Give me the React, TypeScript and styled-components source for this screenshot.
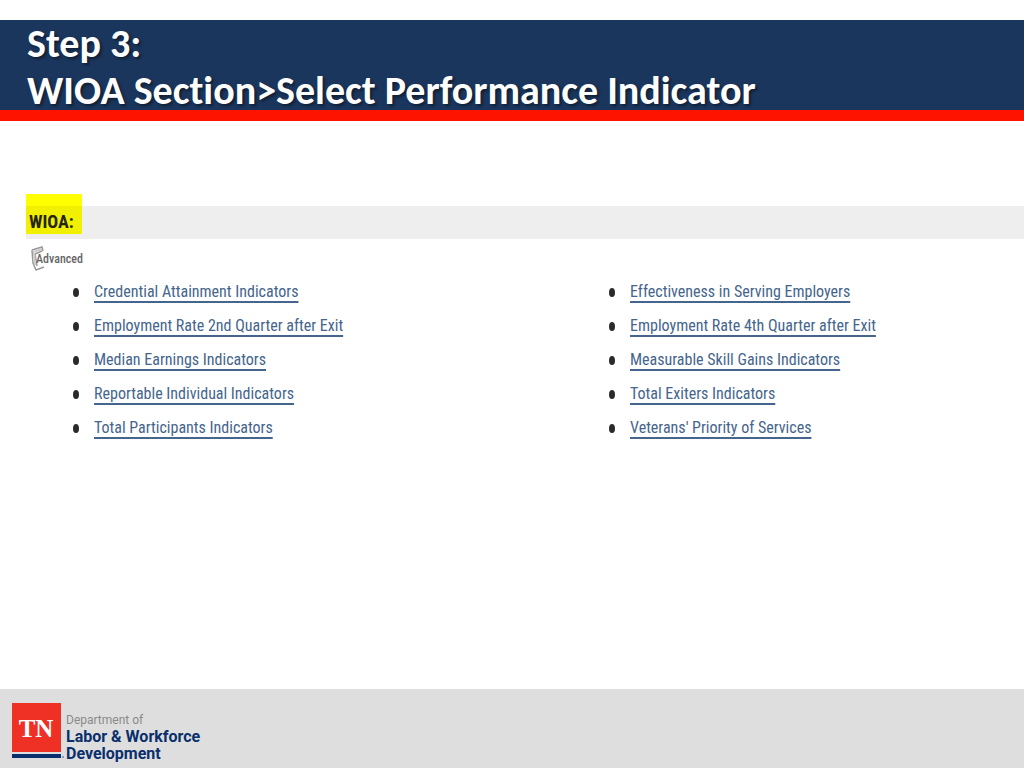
import React from "react";
import styled, { createGlobalStyle } from "styled-components";

const GlobalStyle = createGlobalStyle`
  *, *::before, *::after { box-sizing: border-box; }
  body {
    margin: 0;
    background: #ffffff;
    font-family: "Open Sans", "Noto Sans", sans-serif;
  }
`;

const Slide = styled.div`
  display: flex;
  flex-direction: column;
  min-height: 100vh;
  padding-top: 20px;
`;

const Banner = styled.header`
  height: 101px;
  background: #1b365d;
  border-bottom: 11px solid #fe1300;
  padding: 0 27px;
`;

const Title = styled.h1`
  margin: 0;
  font-family: Carlito, Lato, sans-serif;
  font-size: 40px;
  font-weight: 700;
  line-height: 47px;
  font-variant-ligatures: none;
  color: #ffffff;
  text-shadow: 2px 2px 3px rgba(0, 0, 0, 0.45);
`;

const TitleLine = styled.span`
  display: block;
`;

const Content = styled.main`
  flex: 1;
  padding: 73px 0 32px 26px;
`;

const SectionBar = styled.div`
  display: flex;
  align-items: flex-start;
  height: 45px;
  background: linear-gradient(#ffffff 12px, #eeeeee 12px);
`;

const SectionTitle = styled.h2`
  margin: 0;
  width: 56px;
  height: 40px;
  padding: 16px 0 0 3px;
  background: linear-gradient(#ffff00 12px, #f0f000 12px);
  font-family: "Roboto Condensed", Carlito, sans-serif;
  font-size: 18px;
  font-weight: 700;
  line-height: 24px;
  color: #25250c;
`;

const Advanced = styled.div`
  display: flex;
  align-items: center;
  height: 36px;
  padding: 3px 0 0 5px;
  font-family: "Roboto Condensed", Carlito, sans-serif;
  font-size: 12px;
  font-weight: 500;
  line-height: 20px;
  color: #666666;
`;

const AdvancedIcon = styled.svg`
  width: 16px;
  height: 28px;
  margin-right: -11px;
`;

const Columns = styled.div`
  display: grid;
  grid-template-columns: 536px 1fr;
`;

const LinkList = styled.ul`
  margin: 0;
  padding: 0 0 0 47px;
  list-style: none;
`;

const LinkItem = styled.li`
  display: flex;
  align-items: center;
  height: 34px;
  gap: 15px;

  &::before {
    content: "";
    width: 6px;
    height: 9px;
    border-radius: 50%;
    background: #2b2b2b;
  }
`;

const IndicatorLink = styled.a`
  font-family: "Roboto Condensed", Carlito, sans-serif;
  font-size: 16px;
  line-height: 24px;
  color: #45658c;
  text-decoration: underline;
  text-decoration-thickness: 2px;
  text-underline-offset: 4px;
`;

const Footer = styled.footer`
  display: flex;
  align-items: flex-start;
  height: 79px;
  padding: 14px 12px 0;
  background: #dedede;
`;

const Logo = styled.svg`
  width: 54px;
  height: 56px;
`;

const Department = styled.p`
  margin: 0;
  padding-top: 9px;
  font-family: Roboto, sans-serif;
  font-size: 12px;
  line-height: 16px;
  color: #8a8a8c;
`;

const DepartmentName = styled.strong`
  display: block;
  font-size: 16px;
  line-height: 17px;
  font-weight: 700;
  color: #0a2f6c;
`;

const leftLinks = [
  "Credential Attainment Indicators",
  "Employment Rate 2nd Quarter after Exit",
  "Median Earnings Indicators",
  "Reportable Individual Indicators",
  "Total Participants Indicators",
];

const rightLinks = [
  "Effectiveness in Serving Employers",
  "Employment Rate 4th Quarter after Exit",
  "Measurable Skill Gains Indicators",
  "Total Exiters Indicators",
  "Veterans' Priority of Services",
];

function Indicators({ items }: { items: string[] }) {
  return (
    <LinkList>
      {items.map((item) => (
        <LinkItem key={item}>
          <IndicatorLink href="#">{item}</IndicatorLink>
        </LinkItem>
      ))}
    </LinkList>
  );
}

export default function App() {
  return (
    <>
      <GlobalStyle />
      <Slide>
        <Banner>
          <Title>
            <TitleLine>Step 3:</TitleLine>
            <TitleLine>WIOA Section&gt;Select Performance Indicator</TitleLine>
          </Title>
        </Banner>
        <Content>
          <SectionBar>
            <SectionTitle>WIOA:</SectionTitle>
          </SectionBar>
          <Advanced>
            <AdvancedIcon viewBox="0 0 16 28" aria-hidden="true">
              <path d="M1 5 L11 2 L12 6 M1 5 L2 18 L5 25 L13 22 M4 9 L11 6 M4 9 L6 21" fill="none" stroke="#999999" strokeWidth="1.5" />
              <path d="M2 7 L11 4 M3 8 L4 20" fill="none" stroke="#cccccc" strokeWidth="2" />
            </AdvancedIcon>
            Advanced
          </Advanced>
          <Columns>
            <Indicators items={leftLinks} />
            <Indicators items={rightLinks} />
          </Columns>
        </Content>
        <Footer>
          <Logo viewBox="0 0 54 56" role="img" aria-label="TN">
            <rect width="49" height="49" fill="#ee3124" />
            <rect y="51" width="49" height="4" fill="#0a2f6c" />
            <circle cx="51" cy="54" r="1" fill="#6f83a8" />
            <text x="24" y="34" textAnchor="middle" fontFamily="Liberation Serif, serif" fontWeight="700" fontSize="25" fill="#ffffff">TN</text>
          </Logo>
          <Department>
            Department of
            <DepartmentName>Labor &amp; Workforce</DepartmentName>
            <DepartmentName>Development</DepartmentName>
          </Department>
        </Footer>
      </Slide>
    </>
  );
}
